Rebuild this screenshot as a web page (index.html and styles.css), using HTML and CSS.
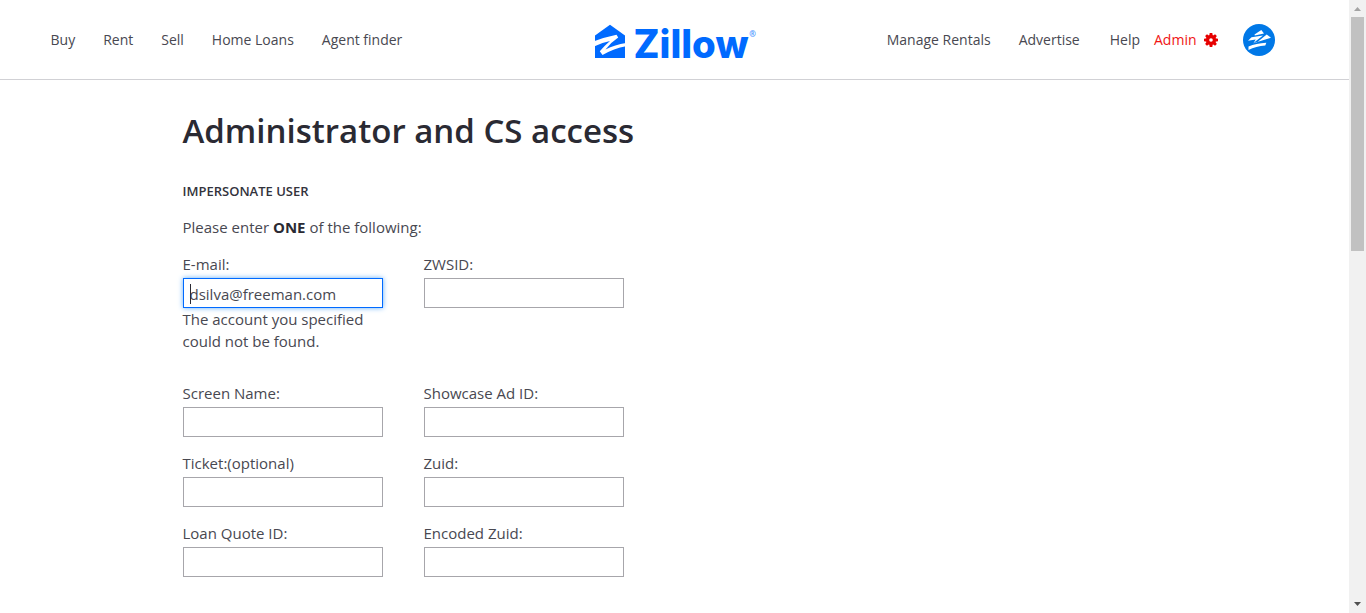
FILE: index.html
```html
<!DOCTYPE html>
<html lang="en">
<head>
<meta charset="utf-8">
<title>Administrator and CS access</title>
<link rel="stylesheet" href="styles.css">
</head>
<body>
<div class="page">
  <header class="header">
    <nav class="nav nav-left">
      <a>Buy</a><a>Rent</a><a>Sell</a><a>Home Loans</a><a>Agent finder</a>
    </nav>
    <svg class="logo" width="162" height="36" viewBox="0 0 162 36" aria-label="Zillow">
      <path class="blue" d="M1 11.500 16 .8 31 11.500V34H1z"/>
      <path class="cut" d="M0 17.2Q11 13.2 22.5 10.8L24.2 13.4Q16.500 18.500 11.500 25.500Q21 20.700 32 19V22.300Q20 24.500 8.500 31L5.800 27.300Q10.500 21.500 16 16.900Q8 18.400 0 22.500z"/>
      <text class="word" x="39.500" y="33.500" textLength="115" lengthAdjust="spacingAndGlyphs">Zillow</text>
      <text class="reg" x="155.300" y="13">®</text>
    </svg>
    <nav class="nav nav-right">
      <a>Manage Rentals</a><a>Advertise</a><a class="help">Help</a>
      <a class="admin">Admin
        <svg class="gear" width="14" height="14" viewBox="0 0 14 14">
          <g fill="#e60000"><circle cx="7" cy="7" r="4.900"/><path d="M5.700 0h2.600l.5 3H5.200zM5.700 14h2.600l.5-3H5.200zM0 5.700v2.600l3 .5V5.200zM14 5.700v2.600l-3 .5V5.200z"/><path transform="rotate(45 7 7)" d="M5.700 0h2.600l.5 3H5.200zM5.700 14h2.600l.5-3H5.200zM0 5.700v2.600l3 .5V5.200zM14 5.700v2.600l-3 .5V5.200z"/></g>
          <circle cx="7" cy="7" r="1.800" fill="#fff"/>
        </svg>
      </a>
      <svg class="avatar" width="32" height="32" viewBox="0 0 32 32">
        <circle cx="16" cy="16" r="16" fill="#0078e7"/>
        <path fill="#fff" d="M11.500 10.500 18.300 6 21 9.600 11.800 11.600zM5 16.800 8.500 13.300 20 11.500 10.200 19.200 28 13.800 23.700 10.600 13.800 18.400 10.400 19.200 12.700 15.600zM5.500 22.600Q13 19.100 23.300 18.700L22.300 21.500Q13 22.300 5.500 26z"/>
      </svg>
    </nav>
  </header>
  <main class="main">
    <h1>Administrator and CS access</h1>
    <h2>IMPERSONATE USER</h2>
    <p class="intro">Please enter <b>ONE</b> of the following:</p>
    <form class="fields">
      <div class="field"><label>E-mail:</label><div class="input focused"><i class="caret"></i>dsilva@freeman.com</div><p class="error">The account you specified could not be found.</p></div>
      <div class="field"><label>ZWSID:</label><div class="input"></div></div>
      <div class="field"><label>Screen Name:</label><div class="input"></div></div>
      <div class="field"><label>Showcase Ad ID:</label><div class="input"></div></div>
      <div class="field"><label>Ticket:(optional)</label><div class="input"></div></div>
      <div class="field"><label>Zuid:</label><div class="input"></div></div>
      <div class="field"><label>Loan Quote ID:</label><div class="input"></div></div>
      <div class="field"><label>Encoded Zuid:</label><div class="input"></div></div>
    </form>
  </main>
</div>
<aside class="scrollbar">
  <svg width="17" height="17"><path d="M5 11h7L8.500 7z" fill="#a3a3a3"/></svg>
  <div class="thumb"></div>
  <svg class="down" width="17" height="17"><path d="M5 6h7L8.500 10z" fill="#505050"/></svg>
</aside>
</body>
</html>
```
FILE: styles.css
```css
* { box-sizing: border-box; }
body {
  margin: 0;
  height: 613px;
  display: flex;
  overflow: hidden;
  background: #fff;
  color: #484851;
  font: 15px/22px "Open Sans", sans-serif;
}
.page { flex: 1; }
.header {
  height: 80px;
  border-bottom: 1px solid #d1d1d5;
  display: grid;
  grid-template-columns: 543.5px 162px 1fr;
  align-items: center;
  padding-left: 50.5px;
}
.nav { display: flex; align-items: center; font-size: 14px; white-space: nowrap; }
.nav-left { gap: 28px; }
.nav-right { justify-content: flex-end; padding-right: 74px; gap: 28px; }
.help { margin-left: 2px; }
.admin { display: flex; align-items: center; gap: 7.5px; margin-left: -14px; color: #f01414; }
.avatar { margin-left: -3px; }
.logo { display: block; margin-top: 4px; overflow: visible; }
.blue { fill: #006aff; }
.cut { fill: #fff; }
.word { fill: #006aff; font: 800 39px Inter, sans-serif; }
.reg { fill: #4c96ff; font: 700 8px "Open Sans", sans-serif; }
.main { padding: 30px 0 0 182.5px; }
h1 { margin: 0; color: #2a2a33; font-size: 33px; line-height: 42px; font-weight: 600; }
h2 { margin: 29px 0 0; color: #33333c; font-size: 13px; line-height: 21px; font-weight: 600; }
.intro { margin: 14px 0 15px; }
.intro b { color: #2a2a33; font-weight: 700; }
.fields { display: grid; grid-template-columns: 200px 200px; column-gap: 41px; row-gap: 15px; }
.field label { display: block; height: 25px; }
.input { height: 30px; border: 1px solid #a7a6ab; padding: 0 6px; line-height: 31px; position: relative; }
.focused { border-color: #006aff; box-shadow: 0 0 5px #62aef7; }
.caret { position: absolute; left: 6px; top: 5px; width: 1px; height: 20px; background: #2a2a33; }
.error { margin: 0 0 15px; }
.scrollbar { width: 17px; background: #f1f1f1; display: flex; flex-direction: column; }
.thumb { width: 13px; height: 234px; margin-left: 2px; background: #c1c1c1; }
.down { margin-top: auto; }
```
